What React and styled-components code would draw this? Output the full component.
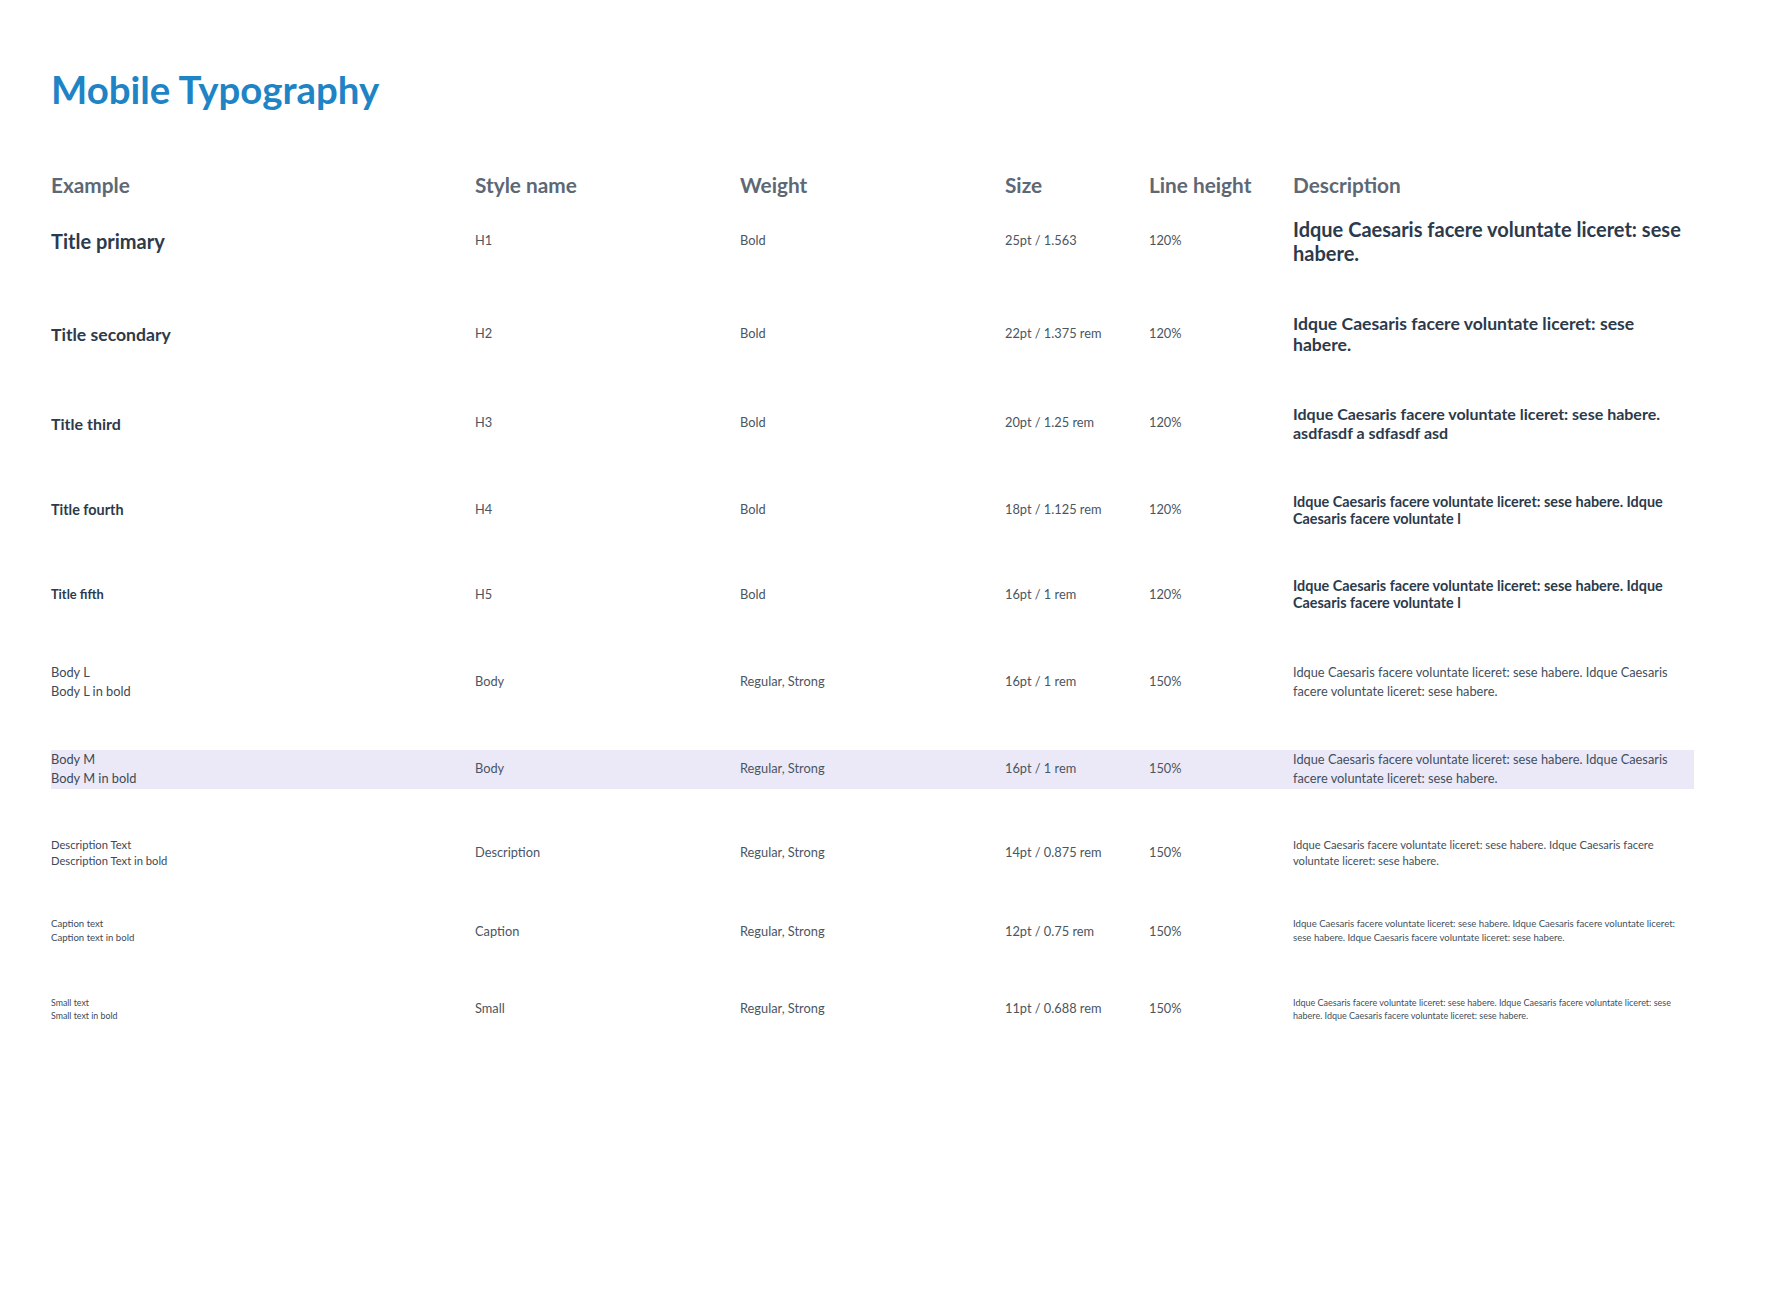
import React from 'react';
import styled, { createGlobalStyle } from 'styled-components';

const GlobalStyle = createGlobalStyle`
  body {
    margin: 0;
    background: #ffffff;
    font-family: Lato, "Noto Sans", sans-serif;
  }
`;

const Page = styled.div`
  padding: 66px 0 0 51px;
`;

const Title = styled.h1`
  margin: 0;
  font-size: 38.4px;
  line-height: 1.2;
  font-weight: 700;
  color: #1f84c5;
`;

const Table = styled.div`
  margin-top: 61px;
  width: 1643px;
`;

const Row = styled.div`
  display: grid;
  grid-template-columns: 424px 265px 265px 144px 144px 401px;
  align-items: center;
  margin-top: ${(p) => p.$space || 0}px;
  background: ${(p) => (p.$highlight ? '#ebe9f8' : 'transparent')};
`;

const HeadRow = styled(Row)`
  font-size: 20.8px;
  line-height: 1.2;
  font-weight: 700;
  color: #5d6874;
`;

const Sample = styled.div`
  font-size: ${(p) => p.$size}px;
  line-height: ${(p) => p.$lh};
  font-weight: ${(p) => (p.$bold ? 700 : 400)};
  color: ${(p) => (p.$bold ? '#2c3a4b' : '#3d4957')};
`;

const Meta = styled.div`
  font-size: 12.8px;
  line-height: 1.4;
  color: #4a5562;
`;

const Desc = styled.div`
  font-size: ${(p) => p.$size}px;
  line-height: ${(p) => p.$lh};
  font-weight: ${(p) => (p.$bold ? 700 : 400)};
  color: ${(p) => (p.$bold ? '#2c3a4b' : '#434f5d')};
`;

const idque = 'Idque Caesaris facere voluntate liceret: sese habere.';

// space = distance above the row, taken from the reference
const rows = [
  { ex: ['Title primary'], name: 'H1', weight: 'Bold', size: '25pt / 1.563', exPx: 20, descPx: 20, lh: 1.2, bold: true, space: 19, desc: idque },
  { ex: ['Title secondary'], name: 'H2', weight: 'Bold', size: '22pt / 1.375 rem', exPx: 17.6, descPx: 17.6, lh: 1.2, bold: true, space: 48, desc: idque },
  { ex: ['Title third'], name: 'H3', weight: 'Bold', size: '20pt / 1.25 rem', exPx: 16, descPx: 16, lh: 1.2, bold: true, space: 49, desc: idque + ' asdfasdf a sdfasdf asd' },
  { ex: ['Title fourth'], name: 'H4', weight: 'Bold', size: '18pt / 1.125 rem', exPx: 14.4, descPx: 14.4, lh: 1.2, bold: true, space: 50, desc: idque + ' Idque Caesaris facere voluntate l' },
  { ex: ['Title fifth'], name: 'H5', weight: 'Bold', size: '16pt / 1 rem', exPx: 12.8, descPx: 14.4, lh: 1.2, bold: true, space: 50, desc: idque + ' Idque Caesaris facere voluntate l' },
  { ex: ['Body L', 'Body L in bold'], name: 'Body', weight: 'Regular, Strong', size: '16pt / 1 rem', exPx: 12.8, descPx: 12.8, lh: 1.5, space: 51, desc: idque + ' ' + idque },
  { ex: ['Body M', 'Body M in bold'], name: 'Body', weight: 'Regular, Strong', size: '16pt / 1 rem', exPx: 12.8, descPx: 12.8, lh: 1.5, space: 49, desc: idque + ' ' + idque, highlight: true },
  { ex: ['Description Text', 'Description Text in bold'], name: 'Description', weight: 'Regular, Strong', size: '14pt / 0.875 rem', exPx: 11.2, descPx: 11.2, lh: 1.5, space: 48, desc: idque + ' ' + idque },
  { ex: ['Caption text', 'Caption text in bold'], name: 'Caption', weight: 'Regular, Strong', size: '12pt / 0.75 rem', exPx: 9.6, descPx: 9.6, lh: 1.5, space: 47, desc: idque + ' ' + idque + ' ' + idque },
  { ex: ['Small text', 'Small text in bold'], name: 'Small', weight: 'Regular, Strong', size: '11pt / 0.688 rem', exPx: 8.8, descPx: 9, lh: 1.5, space: 50, desc: idque + ' ' + idque + ' ' + idque },
];

const App = () => {
  return (
    <>
      <GlobalStyle />
      <Page>
        <Title>Mobile Typography</Title>
        <Table>
          <HeadRow>
            <div>Example</div>
            <div>Style name</div>
            <div>Weight</div>
            <div>Size</div>
            <div>Line height</div>
            <div>Description</div>
          </HeadRow>
          {rows.map((r) => (
            <Row key={r.ex[0]} $space={r.space} $highlight={r.highlight}>
              <Sample $size={r.exPx} $lh={r.lh} $bold={r.bold}>
                {r.ex.map((line) => (
                  <div key={line}>{line}</div>
                ))}
              </Sample>
              <Meta>{r.name}</Meta>
              <Meta>{r.weight}</Meta>
              <Meta>{r.size}</Meta>
              <Meta>{r.lh === 1.2 ? '120%' : '150%'}</Meta>
              <Desc $size={r.descPx} $lh={r.lh} $bold={r.bold}>
                {r.desc}
              </Desc>
            </Row>
          ))}
        </Table>
      </Page>
    </>
  );
};

export default App;
